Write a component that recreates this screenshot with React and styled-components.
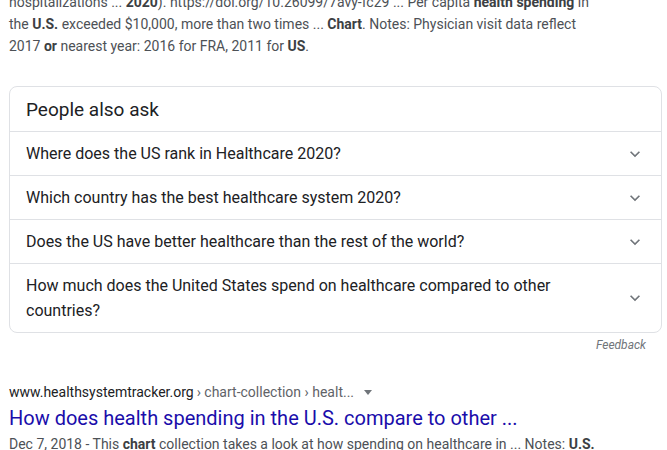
import React from 'react';
import styled, { createGlobalStyle } from 'styled-components';

const GlobalStyle = createGlobalStyle`
  html, body {
    margin: 0;
    padding: 0;
    background: #fff;
    overflow: hidden;
  }
  body {
    font-family: Roboto, "Liberation Sans", Arial, sans-serif;
  }
`;

const Page = styled.div`
  width: 667px;
  height: 450px;
  overflow: hidden;
  padding: 0 5px 0 9px;
  box-sizing: border-box;
`;

const Snippet = styled.div`
  margin-top: -9px;
  font-size: 14px;
  line-height: 22px;
  color: #4d5156;
  width: 590px;
  b {
    color: #3c4043;
    font-weight: 700;
  }
`;

const Card = styled.div`
  margin-top: 29px;
  border: 1px solid #dfe1e5;
  border-radius: 8px;
  overflow: hidden;
`;

const CardHeader = styled.div`
  height: 44px;
  padding: 0 16px;
  display: flex;
  align-items: center;
  font-size: 19px;
  color: #202124;
  border-bottom: 1px solid #dfe1e5;
`;

const Question = styled.div`
  display: flex;
  align-items: center;
  justify-content: space-between;
  padding: 9px 16px 9px 16px;
  font-size: 16px;
  line-height: 25px;
  color: #202124;
  border-bottom: ${p => (p.$last ? 'none' : '1px solid #dfe1e5')};
`;

const QuestionText = styled.span`
  max-width: 560px;
`;

const Chevron = styled.svg`
  width: 20px;
  height: 20px;
  fill: #70757a;
  flex-shrink: 0;
`;

const Feedback = styled.div`
  text-align: right;
  padding-right: 16px;
  font-size: 12px;
  line-height: 16px;
  font-style: italic;
  color: #70757a;
  margin-top: 4px;
`;

const Result = styled.div`
  margin-top: 29px;
`;

const Cite = styled.div`
  display: flex;
  align-items: center;
  font-size: 14px;
  line-height: 20px;
  color: #202124;
`;

const Crumbs = styled.span`
  color: #5f6368;
  margin-left: 3px;
`;

const Caret = styled.span`
  display: inline-block;
  margin-left: 10px;
  width: 0;
  height: 0;
  border-left: 4px solid transparent;
  border-right: 4px solid transparent;
  border-top: 5px solid #70757a;
`;

const Title = styled.a`
  display: block;
  margin-top: 3px;
  font-size: 20px;
  line-height: 26px;
  color: #1a0dab;
  text-decoration: none;
`;

const Desc = styled.div`
  margin-top: 2px;
  font-size: 14px;
  line-height: 22px;
  color: #4d5156;
  white-space: nowrap;
  b {
    color: #3c4043;
  }
`;

const questions = [
  'Where does the US rank in Healthcare 2020?',
  'Which country has the best healthcare system 2020?',
  'Does the US have better healthcare than the rest of the world?',
  'How much does the United States spend on healthcare compared to other countries?'
];

const ChevronDown = () => (
  <Chevron viewBox="0 0 24 24">
    <path d="M7.41 8.59L12 13.17l4.59-4.58L18 10l-6 6-6-6 1.41-1.41z" />
  </Chevron>
);

const App = () => {
  return (
    <Page>
      <GlobalStyle />
      <Snippet>
        hospitalizations ... <b>2020</b>). https://doi.org/10.26099/7avy-fc29 ... Per capita <b>health spending</b> in
        the <b>U.S.</b> exceeded $10,000, more than two times ... <b>Chart</b>. Notes: Physician visit data reflect
        2017 <b>or</b> nearest year: 2016 for FRA, 2011 for <b>US</b>.
      </Snippet>

      <Card>
        <CardHeader>People also ask</CardHeader>
        {questions.map((q, i) => (
          <Question key={q} $last={i === questions.length - 1}>
            <QuestionText>{q}</QuestionText>
            <ChevronDown />
          </Question>
        ))}
      </Card>
      <Feedback>Feedback</Feedback>

      <Result>
        <Cite>
          www.healthsystemtracker.org<Crumbs>› chart-collection › healt...</Crumbs>
          <Caret />
        </Cite>
        <Title href="#">How does health spending in the U.S. compare to other ...</Title>
        <Desc>
          Dec 7, 2018 - This <b>chart</b> collection takes a look at how spending on healthcare in ... Notes: <b>U.S.</b>
        </Desc>
      </Result>
    </Page>
  );
};

export default App;
